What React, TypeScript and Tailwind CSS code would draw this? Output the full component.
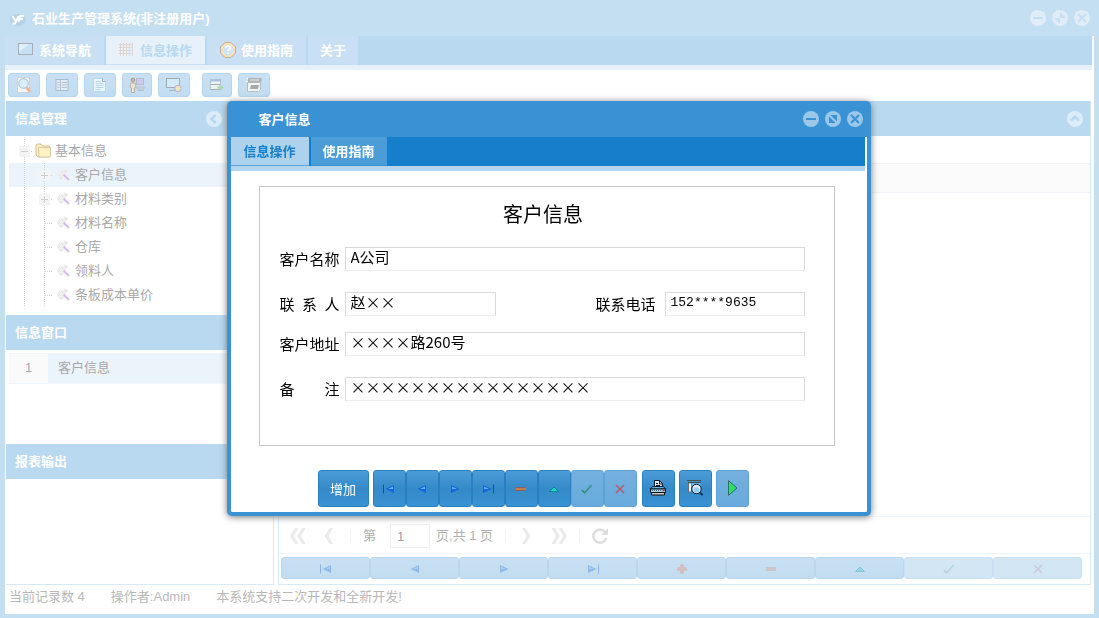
import type { ReactNode } from 'react';

function Minimize() {
  return (
    <svg viewBox="0 0 16 16" className="size-4">
      <circle cx="8" cy="8" r="8" className="fill-current" />
      <path d="M3 8h10" className="stroke-(--cut)" strokeWidth="2" />
    </svg>
  );
}

function Maximize() {
  return (
    <svg viewBox="0 0 16 16" className="size-4">
      <circle cx="8" cy="8" r="8" className="fill-current" />
      <path d="M5.500 4H12v6.500z M4 5.500V12h6.500z" className="fill-(--cut)" />
    </svg>
  );
}

function Restore() {
  return (
    <svg viewBox="0 0 16 16" className="size-4">
      <circle cx="8" cy="8" r="8" className="fill-current" />
      <path d="M8 2v6h6z M2 8h6v6z" className="fill-(--cut)" />
    </svg>
  );
}

function Close() {
  return (
    <svg viewBox="0 0 16 16" className="size-4">
      <circle cx="8" cy="8" r="8" className="fill-current" />
      <path d="M4 4l8 8M12 4l-8 8" className="stroke-(--cut)" strokeWidth="2" />
    </svg>
  );
}

function Chevron({ d }: { d: string }) {
  return (
    <svg viewBox="0 0 16 16" className="size-4">
      <circle cx="8" cy="8" r="8" className="fill-current" />
      <path d={d} fill="none" className="stroke-(--cut)" strokeWidth="2.6" />
    </svg>
  );
}

function LogoIcon() {
  return (
    <svg viewBox="0 0 16 16" className="size-4">
      <ellipse cx="8" cy="9" rx="8" ry="6" fill="#b7d2e4" />
      <path d="M2.500 5l3 5M8.500 5l-3.500 7.500H2.500M8.500 11l1.500-6H14M9.800 8h3" fill="none" stroke="#fff" strokeWidth="1.800" />
    </svg>
  );
}

function MonitorIcon() {
  return (
    <svg viewBox="0 0 16 16" className="size-4">
      <rect x=".5" y="1.500" width="14" height="11" fill="#c5e2f5" stroke="#a9adb0" />
      <path d="M1 10L11 2H1z" fill="#dff0fa" />
    </svg>
  );
}

function GridIcon() {
  return (
    <svg viewBox="0 0 16 16" className="size-4">
      <path d="M0 2.500h14M0 5.500h14M0 8.500h14M0 11.500h14M1.500 1v13M4.500 1v13M7.500 1v13M10.500 1v13M13.500 1v13" stroke="#e2d5d0" />
    </svg>
  );
}

function HelpIcon() {
  return (
    <svg viewBox="0 0 16 16" className="size-4">
      <path d="M5 .5h6L15.500 5v6L11 15.500H5L.5 11V5z" fill="#fbe3ad" stroke="#c4aaa0" />
      <circle cx="8" cy="8" r="5.500" fill="#cfe2f6" />
      <path d="M5.800 6.200c0-3 4.600-2.800 4.600-.3 0 1.600-2.300 1.600-2.300 3.400M8 10.500v1.500" fill="none" stroke="#fff" strokeWidth="1.600" />
    </svg>
  );
}

function SearchPageIcon() {
  return (
    <svg viewBox="0 0 16 16" className="size-4">
      <rect x="1.500" y=".5" width="12" height="15" fill="#f2f5f7" stroke="#c3c9cd" strokeDasharray="2 1" />
      <circle cx="7.500" cy="6.500" r="4.800" fill="#d8effa" stroke="#aebcc8" />
      <path d="M10.500 10.500l3.500 4" stroke="#f0b59c" strokeWidth="3" />
    </svg>
  );
}

function ListIcon() {
  return (
    <svg viewBox="0 0 16 16" className="size-4">
      <rect x="2" y="2.500" width="12" height="11" fill="#e0ebf5" stroke="#a9bccd" />
      <path d="M3.500 5.500h2M3.500 8h2M3.500 10.500h2M8 5.500h5M8 8h5M8 10.500h5" stroke="#b4c1ce" />
      <path d="M6.500 3v10" stroke="#b3c3d3" />
    </svg>
  );
}

function DocIcon() {
  return (
    <svg viewBox="0 0 16 16" className="size-4">
      <path d="M1.500 1.500h9l3 3v10h-12z" fill="#edf7fd" stroke="#b4d8ee" />
      <path d="M10.500 1.500v3h3" fill="none" stroke="#9fb9cd" />
      <path d="M3.500 4.500h5M3.500 6.500h8M3.500 8.500h8M3.500 10.500h8M3.500 12.500h5" stroke="#b5d6ea" />
    </svg>
  );
}

function UserIcon() {
  return (
    <svg viewBox="0 0 16 16" className="size-4">
      <rect x="7.500" y="1.500" width="7" height="6" fill="#cdc8f0" stroke="#b5bcc6" />
      <path d="M8 10h7v2H8zM9 13.500h6" fill="#d8dde3" stroke="#b6bec7" />
      <circle cx="4" cy="3" r="1.800" fill="#cbb5a5" stroke="#a59c95" />
      <path d="M2 6h4l1 4-1.500 1v4.500h-3V11L1 10z" fill="#f3e2cb" stroke="#bbaea2" />
    </svg>
  );
}

function MonitorGearIcon() {
  return (
    <svg viewBox="0 0 16 16" className="size-4">
      <rect x=".5" y="1.500" width="13" height="9" fill="#d3ebf9" stroke="#9eabb5" />
      <path d="M3 13.500h6" stroke="#aab5bd" />
      <circle cx="12" cy="11.500" r="3.300" fill="#dbe6c4" stroke="#cda8cf" />
      <circle cx="12" cy="11" r="1.500" fill="#f1ecb8" />
    </svg>
  );
}

function FormAddIcon() {
  return (
    <svg viewBox="0 0 16 16" className="size-4">
      <rect x="1.500" y="2.500" width="10" height="10" fill="#edf2f4" stroke="#b9c4cc" />
      <path d="M1 3.500h11" stroke="#a5c3dc" strokeWidth="2" />
      <path d="M2 7.500h9M2 12.500h9" stroke="#a3abb0" />
      <path d="M11.500 7.500v6M8.500 10.500h6" stroke="#a8dab0" strokeWidth="2" />
    </svg>
  );
}

function FaxIcon() {
  return (
    <svg viewBox="0 0 16 16" className="size-4">
      <path d="M2.500 1h13v4h-14z" fill="#aeb3b6" />
      <path d="M1 1l1 1M0 4l2 1" stroke="#fff" />
      <path d="M1.500 5.500h13v7l-2 2h-11z" fill="#f2f4f4" stroke="#b4babe" />
      <path d="M5 8h8l-1 4H4z" fill="#a4a9ac" />
      <path d="M4 3h9" stroke="#e8eaea" />
    </svg>
  );
}

function FolderIcon() {
  return (
    <svg viewBox="0 0 16 16" className="size-4">
      <path d="M1 3V2l1-1h4l2 2h6l1 1v9l-1 1H3l-2-2z" fill="#fdeebd" stroke="#d3be97" />
      <path d="M3.500 4.500h12v9l-1 .500H4z" fill="#fff3c4" stroke="#dcc99e" />
    </svg>
  );
}

function ToolIcon() {
  return (
    <svg viewBox="0 0 16 16" className="size-4">
      <path d="M1 7l3-4 3 1 2-3 4 3-3 2-1 5-4 2-3-2z" fill="#f0f0f0" />
      <path d="M2 9l2-2M5 4l2 2M9 3l2 2M4 12l2-2" stroke="#dcdcdc" />
      <path d="M7.500 7.500L13 13" stroke="#d9b6f4" strokeWidth="1.800" />
    </svg>
  );
}

function FirstIcon() {
  return (
    <svg viewBox="0 0 16 12" className="h-3 w-4">
      <path d="M2.500 1.500v9" stroke="#0a4fc0" />
      <path d="M13 2v8L4.500 6z" fill="#1565d8" />
      <path d="M12 3.500V6L7 6z" fill="#5fb4ff" />
    </svg>
  );
}

function LastIcon() {
  return (
    <svg viewBox="0 0 16 12" className="h-3 w-4">
      <path d="M13.500 1.500v9" stroke="#0a4fc0" />
      <path d="M3 2v8l8.500-4z" fill="#1565d8" />
      <path d="M4 3.500V6h5z" fill="#5fb4ff" />
    </svg>
  );
}

function PrevIcon() {
  return (
    <svg viewBox="0 0 12 12" className="size-3">
      <path d="M10 2v8L1.500 6z" fill="#1565d8" />
      <path d="M9 3.500V6H4z" fill="#5fb4ff" />
    </svg>
  );
}

function NextIcon() {
  return (
    <svg viewBox="0 0 12 12" className="size-3">
      <path d="M2 2v8l8.500-4z" fill="#1565d8" />
      <path d="M3 3.500V6h5z" fill="#5fb4ff" />
    </svg>
  );
}

function PlusIcon() {
  return (
    <svg viewBox="0 0 12 12" className="size-3">
      <path d="M6 1.500v9M1.500 6h9" stroke="#ff3a0c" strokeWidth="3" />
      <path d="M6 2.500v7M2.500 6h7" stroke="#ffb070" strokeWidth="1" />
    </svg>
  );
}

function MinusIcon() {
  return (
    <svg viewBox="0 0 12 12" className="size-3">
      <path d="M1 5h10M1 7h10" stroke="#e63208" />
      <path d="M1 6h10" stroke="#ff9a2c" />
    </svg>
  );
}

function UpIcon() {
  return (
    <svg viewBox="0 0 12 12" className="size-3">
      <path d="M1.500 8.500L6 4l4.500 4.500z" fill="#1fd3d6" stroke="#078a8c" />
    </svg>
  );
}

function CheckIcon() {
  return (
    <svg viewBox="0 0 12 12" className="size-3">
      <path d="M1 7l2.500 3L10.500 2" fill="none" stroke="#36947c" strokeWidth="1.700" />
    </svg>
  );
}

function CrossIcon() {
  return (
    <svg viewBox="0 0 12 12" className="size-3">
      <path d="M2 2l8 8M10 2l-8 8" stroke="#b75a6c" strokeWidth="1.600" />
    </svg>
  );
}

function PrinterIcon() {
  return (
    <svg viewBox="0 0 16 16" className="size-4">
      <path d="M4.500 7V.5h5l3 3V7" fill="#dff0fb" stroke="#0a1420" />
      <path d="M9.500 1v3h3M6 3.500h2M6 5.500h4" fill="none" stroke="#0a1420" />
      <path d="M2.500 6.500h11l2 2.500H.5z" fill="#5fb2ea" stroke="#0a1420" />
      <path d="M.5 9h15v3.500H.5z" fill="#9ed6f5" stroke="#0a1420" />
      <path d="M1.500 12.500h13v2.500h-13z" fill="#c9c9c9" stroke="#111" />
      <path d="M2 10.500h9" stroke="#47708c" strokeDasharray="1 1" />
      <path d="M12.500 10.500h2" stroke="#e02020" strokeWidth="1.500" />
    </svg>
  );
}

function PreviewIcon() {
  return (
    <svg viewBox="0 0 16 16" className="size-4">
      <path d="M0 .5h14M1 2.500h13" stroke="#4a4f54" />
      <path d="M1.500 3v9h5" fill="none" stroke="#6a6f74" />
      <path d="M3 3.500v8" stroke="#e9f5fc" strokeWidth="2" />
      <path d="M4.500 3h9v3h-9z" fill="#5db4ee" />
      <circle cx="9.500" cy="9" r="4.700" fill="#d8f0ff" stroke="#0b1c2b" />
      <circle cx="9.500" cy="10" r="2.800" fill="#8fd0fa" />
      <path d="M13 13l2.500 2" stroke="#0b2d50" strokeWidth="2" />
    </svg>
  );
}

function PlayIcon() {
  return (
    <svg viewBox="0 0 16 16" className="size-4">
      <path d="M4.500 .7v14.600L13 8z" fill="#35d96c" stroke="#23755a" />
    </svg>
  );
}

function PageArrow({ double, right }: { double?: boolean; right?: boolean }) {
  return (
    <svg viewBox="0 0 16 16" className="size-4 text-[#ebebeb]">
      <g transform={right ? 'matrix(-1 0 0 1 16 0)' : undefined} fill="currentColor">
        {double ? (
          <path d="M5 0h3.500L4 8l4.500 8H5L0 8zM12 0h3.500L11 8l4.500 8H12L7 8z" />
        ) : (
          <path d="M8.500 0H12L7.500 8l4.500 8H8.500l-5-8z" />
        )}
      </g>
    </svg>
  );
}

function RefreshIcon() {
  return (
    <svg viewBox="0 0 16 16" className="size-4">
      <path d="M13 4A6.500 6.500 0 1 0 14.200 10" fill="none" stroke="#dedede" strokeWidth="2.600" />
      <path d="M16 0v7H9z" fill="#dedede" />
    </svg>
  );
}

function TreeCell({ box, stub }: { box?: 'plus' | 'minus'; stub?: boolean }) {
  return (
    <svg viewBox="0 0 20 24" className="h-6 w-5 shrink-0">
      <path d="M10.500 0v24" stroke="#d2d2d2" strokeDasharray="1 1" />
      {stub && <path d="M11 12.500h8" stroke="#d2d2d2" strokeDasharray="1 1" />}
      {box && <rect x="5" y="7" width="11" height="11" fill="#f4f4f4" />}
      {box && <path d="M7 12.500h7" stroke="#cfcfcf" />}
      {box === 'plus' && <path d="M10.500 9v7" stroke="#cfcfcf" />}
    </svg>
  );
}

const mainTabs: { label: string; icon?: ReactNode; active?: boolean }[] = [
  { label: '系统导航', icon: <MonitorIcon /> },
  { label: '信息操作', icon: <GridIcon />, active: true },
  { label: '使用指南', icon: <HelpIcon /> },
  { label: '关于' },
];

const tools: { label: string; icon: ReactNode; className: string }[] = [
  { label: '查询', icon: <SearchPageIcon />, className: 'w-8' },
  { label: '列表', icon: <ListIcon />, className: 'w-8' },
  { label: '文档', icon: <DocIcon />, className: 'w-8' },
  { label: '用户', icon: <UserIcon />, className: 'w-[30px]' },
  { label: '设置', icon: <MonitorGearIcon />, className: 'w-8' },
  { label: '新增', icon: <FormAddIcon />, className: 'ml-1.5 w-[30px]' },
  { label: '打印', icon: <FaxIcon />, className: 'w-8' },
];

const treeItems: { label: string; box?: 'plus'; active?: boolean }[] = [
  { label: '客户信息', box: 'plus', active: true },
  { label: '材料类别', box: 'plus' },
  { label: '材料名称' },
  { label: '仓库' },
  { label: '领料人' },
  { label: '条板成本单价' },
];

const recordButtons: { label: string; icon: ReactNode; disabled?: boolean; listOnly?: boolean }[] = [
  { label: '首条', icon: <FirstIcon /> },
  { label: '上一条', icon: <PrevIcon /> },
  { label: '下一条', icon: <NextIcon /> },
  { label: '末条', icon: <LastIcon /> },
  { label: '添加', icon: <PlusIcon />, listOnly: true },
  { label: '删除', icon: <MinusIcon /> },
  { label: '编辑', icon: <UpIcon /> },
  { label: '保存', icon: <CheckIcon />, disabled: true },
  { label: '取消', icon: <CrossIcon />, disabled: true },
];

const solidButton =
  'flex h-[37px] items-center justify-center rounded-[3px] border border-[#2a7fc0] bg-linear-to-b from-[#4b9cd7] from-0% via-[#358ac8] via-50% to-[#3892d3] text-white';
const paleButton =
  'flex h-[37px] items-center justify-center rounded-[3px] border border-[#5da3d8] bg-linear-to-b from-[#74b0df] to-[#68abdc]';

function PanelHeader({ title, children }: { title?: string; children?: ReactNode }) {
  return (
    <header className="flex h-[35px] shrink-0 items-center justify-between bg-[#b8d9f0] pl-[9px]">
      <h2 className="font-bold text-white">{title}</h2>
      {children}
    </header>
  );
}

function Sidebar() {
  return (
    <aside className="flex w-[268px] shrink-0 flex-col border-r border-b border-[#d7e9f6]">
      <PanelHeader title="信息管理">
        <button type="button" aria-label="收起" className="mr-[51px] text-[#dcecf8] [--cut:#b8d9f0]">
          <Chevron d="M9.500 4L5.500 8l4 4" />
        </button>
      </PanelHeader>
      <ul className="h-[179px] pt-[3px] pl-[3px] text-[#a8a8a8]">
        <li>
          <div className="flex h-6 items-center pl-[5px]">
            <TreeCell box="minus" stub />
            <span className="pl-px"><FolderIcon /></span>
            <span className="pl-1">基本信息</span>
          </div>
          <ul>
            {treeItems.map((item) => (
              <li
                key={item.label}
                className={item.active ? 'flex h-6 items-center bg-[#ebf4fa] pl-[5px]' : 'flex h-6 items-center pl-[5px]'}
              >
                <TreeCell />
                <TreeCell box={item.box} stub />
                <span className="pl-0.5"><ToolIcon /></span>
                <span className="pl-[3px]">{item.label}</span>
              </li>
            ))}
          </ul>
        </li>
      </ul>
      <PanelHeader title="信息窗口" />
      <div className="h-[94px] pt-[3px] pl-[3px]">
        <table className="w-full border-collapse text-[#a8a8a8]">
          <tbody>
            <tr className="h-[30px] border-y border-[#f0f6fb] bg-[#ebf4fa]">
              <td className="w-[39px] bg-[#fafafa] pb-0.5 text-center">1</td>
              <td className="pb-0.5 pl-2.5">客户信息</td>
            </tr>
          </tbody>
        </table>
      </div>
      <PanelHeader title="报表输出" />
      <div className="grow" />
    </aside>
  );
}

function Pager() {
  return (
    <div className="flex h-[38px] shrink-0 items-center border-y border-[#f0f5fa] pt-0.5 pl-[11px] text-[#b0b0b0]">
      <button type="button" aria-label="第一页"><PageArrow double /></button>
      <button type="button" aria-label="上一页" className="ml-[15px]"><PageArrow /></button>
      <span className="ml-[13px] h-3.5 w-px bg-[#f3f3f3]" />
      <label htmlFor="page" className="ml-3">第</label>
      <input
        id="page"
        defaultValue="1"
        className="ml-3.5 h-6 w-10 border border-[#f0f0f0] bg-white px-1.5 text-[#a0a0a0] outline-none"
      />
      <span className="ml-1.5 whitespace-nowrap">页,共 1 页</span>
      <span className="ml-3 h-3.5 w-px bg-[#f3f3f3]" />
      <button type="button" aria-label="下一页" className="ml-3"><PageArrow right /></button>
      <button type="button" aria-label="最后一页" className="ml-[17px]"><PageArrow double right /></button>
      <span className="ml-3 h-3.5 w-px bg-[#f3f3f3]" />
      <button type="button" aria-label="刷新" className="ml-3"><RefreshIcon /></button>
    </div>
  );
}

function MainPanel() {
  return (
    <main className="flex grow flex-col border-x border-b border-[#d7e9f6]">
      <PanelHeader>
        <button type="button" aria-label="折叠" className="mr-[7px] text-[#dcecf8] [--cut:#b8d9f0]">
          <Chevron d="M4 9.500l4-4 4 4" />
        </button>
      </PanelHeader>
      <div className="h-[27px] shrink-0" />
      <div className="h-[30px] shrink-0 border-y border-[#f0f4f7] bg-[#fbfbfb]" />
      <div className="grow" />
      <Pager />
      <div className="flex pt-[3px] pr-2 pb-[5px] pl-0.5">
        {recordButtons.map((button) => (
          <button
            key={button.label}
            type="button"
            aria-label={button.label}
            disabled={button.disabled}
            className={
              button.disabled
                ? 'flex h-[22px] flex-1 items-center justify-center rounded-[3px] border border-[#c8e0f1] bg-[#d3e6f4]'
                : 'flex h-[22px] flex-1 items-center justify-center rounded-[3px] border border-[#b8d7ed] bg-linear-to-b from-[#c9e0f3] to-[#c1dcf0]'
            }
          >
            <span className={button.disabled ? 'pt-0.5 opacity-20' : 'pt-0.5 opacity-30'}>{button.icon}</span>
          </button>
        ))}
      </div>
    </main>
  );
}

function Field({ id, label, value, className = 'w-full' }: { id: string; label: string; value: string; className?: string }) {
  return (
    <div className="flex grow items-center gap-[5px]">
      <label htmlFor={id} className="w-[60px] shrink-0 [text-align-last:justify]">{label}</label>
      <input
        id={id}
        defaultValue={value}
        className={`h-6 border border-[#d9d9d9] border-b-[#ececec] bg-white px-[5px] pb-1 outline-none ${className}`}
      />
    </div>
  );
}

function CustomerDialog() {
  return (
    <div
      role="dialog"
      aria-label="客户信息"
      className="w-[644px] rounded-[5px] border-4 border-t-0 border-[#3892d4] bg-white shadow-[0_1px_7px_#777777]"
    >
      <header className="flex h-9 items-center justify-between bg-[#3892d4] pr-1 pl-7">
        <h2 className="pt-0.5 font-bold text-white">客户信息</h2>
        <div className="flex gap-1.5 text-[#9bc8e9] [--cut:#3892d4]">
          <button type="button" aria-label="最小化"><Minimize /></button>
          <button type="button" aria-label="最大化"><Maximize /></button>
          <button type="button" aria-label="关闭"><Close /></button>
        </div>
      </header>
      <nav className="mr-0.5 flex h-[34px] items-stretch gap-0.5 border-b-[5px] border-[#b3d5ee] bg-[#157fcc] font-bold">
        <button type="button" className="border-b border-[#5ba3d8] bg-[#add2ed] px-[13px] pt-0.5 text-[#157fcc]">信息操作</button>
        <button type="button" className="border-b border-[#3892d4] bg-[#4b9cd7] px-3 pt-0.5 text-white">使用指南</button>
      </nav>
      <form className="mt-[15px] mr-8 ml-7 border border-[#c6c6c6] pt-3 pr-[29px] pb-11 pl-5 font-['Noto_Sans_CJK_SC','Liberation_Sans',sans-serif] text-[15px] leading-5 text-black">
        <h1 className="mb-[18px] pl-0.5 text-center text-xl leading-[30px]">客户信息</h1>
        <Field id="name" label="客户名称" value="A公司" />
        <div className="mt-[21px] flex">
          <Field id="contact" label="联 系 人" value="赵××" className="w-[151px]" />
          <div className="flex items-center gap-[9px]">
            <label htmlFor="phone">联系电话</label>
            <input
              id="phone"
              defaultValue="152****9635"
              className="h-6 w-[140px] border border-[#d9d9d9] border-b-[#ececec] bg-white px-[5px] pb-0.5 font-['Liberation_Mono',monospace] text-[13px] outline-none"
            />
          </div>
        </div>
        <div className="mt-4">
          <Field id="address" label="客户地址" value="××××路260号" />
        </div>
        <div className="mt-[21px]">
          <Field id="note" label="备 注" value="××××××××××××××××" />
        </div>
      </form>
      <div className="flex gap-1 pt-6 pb-[5px] pl-[87px]">
        <button type="button" className={`${solidButton} w-[51px] pt-1`}>增加</button>
        <div className="flex">
          {recordButtons
            .filter((button) => !button.listOnly)
            .map((button) => (
              <button
                key={button.label}
                type="button"
                aria-label={button.label}
                disabled={button.disabled}
                className={`${button.disabled ? paleButton : solidButton} w-[33px] pt-0.5`}
              >
                {button.icon}
              </button>
            ))}
        </div>
        <button type="button" aria-label="打印" className={`${solidButton} ml-px w-[33px]`}><PrinterIcon /></button>
        <button type="button" aria-label="预览" className={`${solidButton} w-[33px]`}><PreviewIcon /></button>
        <button type="button" aria-label="运行" className={`${paleButton} w-[33px]`}><PlayIcon /></button>
      </div>
    </div>
  );
}

export default function App() {
  return (
    <div className="flex min-h-screen flex-col border-x-[5px] border-b-4 border-[#c4def2] bg-white font-['Liberation_Sans','Noto_Sans_CJK_SC',sans-serif] text-[13px] leading-5">
      <header className="flex h-9 shrink-0 items-center justify-between bg-[#c4def2] pr-1 pl-[5px]">
        <div className="flex items-center gap-1.5 pt-0.5">
          <LogoIcon />
          <h1 className="font-bold text-white">石业生产管理系统(非注册用户)</h1>
        </div>
        <div className="flex gap-1.5 text-[#e0edf8] [--cut:#c4def2]">
          <button type="button" aria-label="最小化"><Minimize /></button>
          <button type="button" aria-label="还原"><Restore /></button>
          <button type="button" aria-label="关闭"><Close /></button>
        </div>
      </header>
      <nav className="mr-0.5 flex h-[34px] shrink-0 gap-0.5 border-b-[5px] border-[#e6f1fa] bg-[#b8d9f0] font-bold">
        {mainTabs.map((tab) => (
          <button
            key={tab.label}
            type="button"
            className={
              tab.active
                ? 'flex items-center gap-[5px] border-b border-[#c9e0f2] bg-[#e6f1fa] px-[13px] text-[#b8d9f0]'
                : tab.icon
                  ? 'flex items-center gap-[5px] border-b border-[#c4def2] bg-[#c9dff3] px-[13px] text-white'
                  : 'flex items-center border-b border-[#c4def2] bg-[#c9dff3] px-3 text-white'
            }
          >
            {tab.icon}
            <span className="pt-0.5">{tab.label}</span>
          </button>
        ))}
      </nav>
      <div className="flex h-[31px] shrink-0 items-center gap-1.5 pb-0.5 pl-[3px]">
        {tools.map((tool) => (
          <button
            key={tool.label}
            type="button"
            aria-label={tool.label}
            className={`flex h-6 items-center justify-center rounded-[3px] border border-[#b3d5ee] bg-linear-to-b from-[#c9e0f3] to-[#c1dcf0] ${tool.className}`}
          >
            {tool.icon}
          </button>
        ))}
      </div>
      <div className="mr-[3px] ml-px flex grow gap-1">
        <Sidebar />
        <MainPanel />
      </div>
      <footer className="flex h-[29px] shrink-0 gap-[26px] pt-0.5 pl-1 text-[#b8b8b8]">
        <span>当前记录数 4</span>
        <span>操作者:Admin</span>
        <span>本系统支持二次开发和全新开发!</span>
      </footer>
      <div className="fixed inset-0 flex items-center justify-center pr-0.5 pb-0.5">
        <CustomerDialog />
      </div>
    </div>
  );
}
